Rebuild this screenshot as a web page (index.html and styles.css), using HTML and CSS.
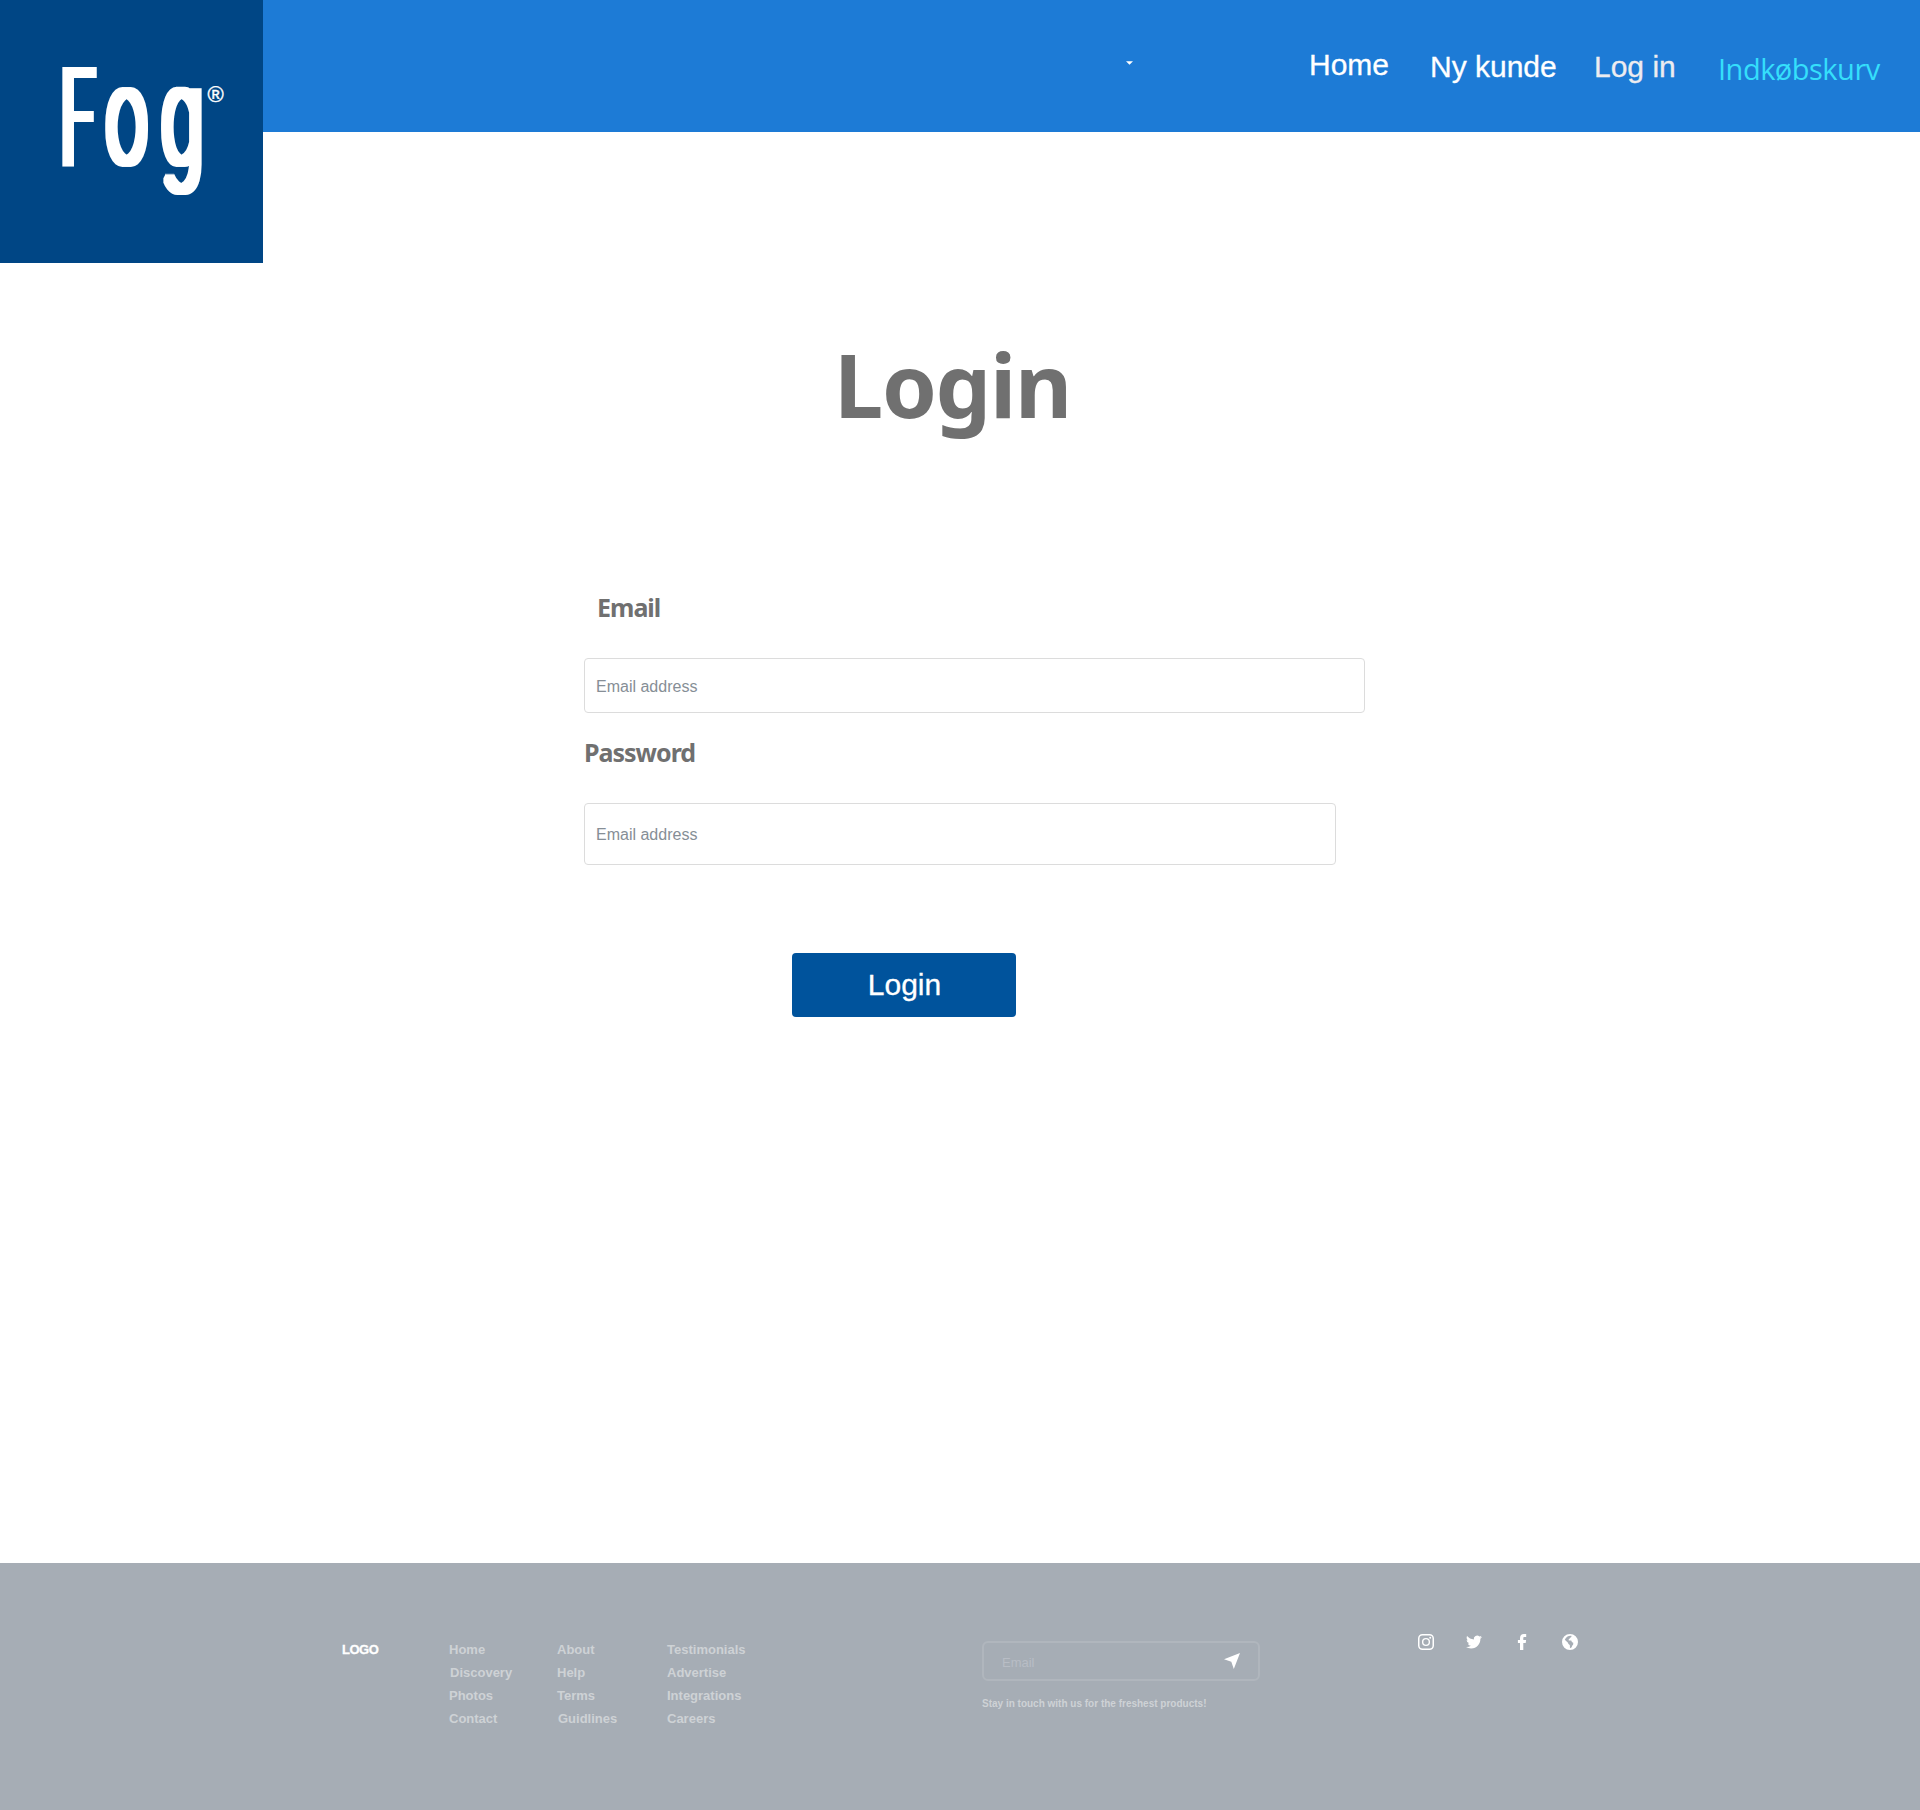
FILE: index.html
```html
<!DOCTYPE html>
<html lang="da">
<head>
<meta charset="utf-8">
<title>Fog - Login</title>
<link rel="stylesheet" href="styles.css">
</head>
<body>
<header class="topbar">
  <a class="brand" href="#">
    <svg width="263" height="263" viewBox="0 0 263 263" role="img" aria-label="Fog">
      <defs>
        <filter id="widen" filterUnits="userSpaceOnUse" x="40" y="40" width="200" height="180"><feMorphology operator="dilate" radius="4 2"/></filter>
      </defs>
      <g class="brand-word" filter="url(#widen)">
        <text transform="translate(61 164) scale(.43 .96)">F</text>
        <text transform="translate(106 163.500) scale(.53 1)">o</text>
        <text transform="translate(161 163.500) scale(.55 1)">g</text>
      </g>
      <text class="brand-mark" x="207.500" y="101.500">®</text>
    </svg>
  </a>
  <nav class="nav">
    <svg class="caret" width="7" height="4" viewBox="0 0 7 4"><path d="M0 .3h7L3.500 3.700z"/></svg>
    <a class="nav-home" href="#">Home</a>
    <a class="nav-new" href="#">Ny kunde</a>
    <a class="nav-login" href="#">Log in</a>
    <a class="nav-cart" href="#">Indkøbskurv</a>
  </nav>
</header>

<main class="login">
  <h1 class="title">Login</h1>
  <form class="form">
    <label class="label label-email" for="email">Email</label>
    <input class="field field-email" id="email" type="text" placeholder="Email address">
    <label class="label label-password" for="password">Password</label>
    <input class="field field-password" id="password" type="text" placeholder="Email address">
    <button class="submit" type="button">Login</button>
  </form>
</main>

<footer class="footer">
  <strong class="footer-logo">LOGO</strong>
  <ul class="links links-a"><li>Home</li><li class="nudge-r">Discovery</li><li>Photos</li><li>Contact</li></ul>
  <ul class="links links-b"><li>About</li><li>Help</li><li>Terms</li><li class="nudge-r">Guidlines</li></ul>
  <ul class="links links-c"><li>Testimonials</li><li>Advertise</li><li>Integrations</li><li>Careers</li></ul>
  <div class="news">
    <div class="news-box">
      <span>Email</span>
      <svg width="16" height="16" viewBox="0 0 16 16"><path d="M16 0 0 6.300l7.300 2.400L9.800 16z"/></svg>
    </div>
    <p class="news-note">Stay in touch with us for the freshest products!</p>
  </div>
  <div class="social">
    <svg width="16" height="16" viewBox="0 0 16 16"><rect x=".75" y=".75" width="14.500" height="14.500" rx="3.700" fill="none" stroke="#fff" stroke-width="1.500"/><circle cx="8" cy="8" r="3.350" fill="none" stroke="#fff" stroke-width="1.400"/><circle cx="12.200" cy="3.800" r="1"/></svg>
    <svg width="16" height="16" viewBox="0 0 24 24"><path d="M23.950 4.570a10 10 0 0 1-2.820.77 4.960 4.960 0 0 0 2.160-2.720c-.95.550-2 .95-3.130 1.180a4.920 4.920 0 0 0-8.380 4.480C7.690 8.090 4.070 6.130 1.640 3.160a4.820 4.820 0 0 0-.67 2.480c0 1.710.87 3.210 2.190 4.100a4.900 4.900 0 0 1-2.230-.62v.06a4.920 4.920 0 0 0 3.950 4.830 5 5 0 0 1-2.210.080 4.940 4.940 0 0 0 4.600 3.420A9.870 9.870 0 0 1 0 19.540a14 14 0 0 0 7.550 2.210c9.050 0 14-7.500 14-13.980 0-.21 0-.42-.02-.63a9.940 9.940 0 0 0 2.420-2.570z"/></svg>
    <svg width="16" height="16" viewBox="0 0 16 16"><path d="M6 16V9H3.900V6H6V4.200C6 1.500 7.400 0 9.900 0h2.300v2.900h-1.500c-1.200 0-1.400.5-1.400 1.400V6h2.800l-.4 3H9.300v7z"/></svg>
    <svg width="16" height="16" viewBox="0 0 16 16"><path fill-rule="evenodd" d="M8 0a8 8 0 1 0 0 16A8 8 0 0 0 8 0zM9.400 1.700c.2 1.100-.2 1.700-1.100 1.900-.2.900-.6 1.200-1.500 1.300l-.1 1.500 2.600.2c.4 1.500.9 1.900 2 2.200l-.2 2c-.8.500-1.300 1.300-1.400 2.400l-1.700 1.100-.2-3.300C6.700 10.400 6.200 9.700 6 8.700L2.800 5.800C3.800 3 6.500 1.400 9.400 1.700z"/></svg>
  </div>
</footer>
</body>
</html>
```
FILE: styles.css
```css
* { box-sizing: border-box; }
body {
  margin: 0;
  min-height: 1810px;
  display: flex;
  flex-direction: column;
  background: #fff;
  font-family: "Liberation Sans", Arial, sans-serif;
}
a { color: inherit; text-decoration: none; }

/* Header */
.topbar { display: flex; align-items: flex-start; height: 132px; background: #1d7bd6; }
.brand { flex: none; display: block; width: 263px; height: 263px; background: #004685; }
.brand svg { display: block; fill: #fff; }
.brand-word { font: 300 139px Roboto, sans-serif; }
.brand-mark { font: 400 22px "Liberation Sans", sans-serif; stroke: #fff; stroke-width: .4px; }
.nav {
  flex: 1;
  display: flex;
  align-items: flex-start;
  color: #fff;
  font-size: 30px;
  line-height: 34px;
  white-space: nowrap;
  -webkit-text-stroke: .3px;
}
.caret { flex: none; margin: 61px 176px 0 863px; fill: #fff; }
.nav a { flex: none; }
.nav-home { width: 121px; margin-top: 48px; }
.nav-new { width: 164px; margin-top: 50px; }
.nav-login { width: 124px; margin-top: 50px; color: #ececf0; }
.nav-cart {
  margin-top: 52px;
  color: #35dffb;
  font-family: "Open Sans", sans-serif;
  font-size: 29px;
  letter-spacing: -.5px;
  -webkit-text-stroke: 0;
}

/* Login form */
.login { height: 1431px; padding-top: 192px; }
.title {
  margin: 0 0 0 834px;
  height: 120px;
  color: #707070;
  font: 700 88px/120px "Noto Sans", sans-serif;
  letter-spacing: -1.3px;
}
.form { display: flex; flex-direction: column; align-items: flex-start; margin: 146px 0 0 584px; }
.label { color: #707070; font: 700 25px/34px "Noto Sans", sans-serif; letter-spacing: -1px; }
.label-email { margin-left: 13px; }
.field {
  padding: 2px 11px 0;
  border: 1px solid #dcdcdc;
  border-radius: 4px;
  background: #fff;
  font: 16px "Liberation Sans", sans-serif;
}
.field::placeholder { color: #868e96; opacity: 1; }
.field-email { width: 781px; height: 55px; margin-top: 34px; }
.label-password { margin-top: 22px; }
.field-password { width: 752px; height: 62px; margin-top: 34px; }
.submit {
  width: 224px;
  height: 64px;
  margin: 88px 0 0 208px;
  padding: 0 0 0 1px;
  border: 0;
  border-radius: 4px;
  background: #00539c;
  color: #fff;
  font: 30px "Liberation Sans", sans-serif;
  -webkit-text-stroke: .3px;
}

/* Footer */
.footer {
  display: flex;
  align-items: flex-start;
  height: 247px;
  padding: 0 0 0 342px;
  background: #a6adb5;
  color: #ced2d5;
  font-size: 13px;
  white-space: nowrap;
}
.footer-logo { width: 107px; margin-top: 75px; line-height: 23px; color: #fff; letter-spacing: -.5px; -webkit-text-stroke: .3px; }
.links { flex: none; margin: 75px 0 0; padding: 0; list-style: none; font-weight: 700; line-height: 23px; }
.links-a { width: 108px; }
.links-b { width: 110px; }
.links-c { width: 315px; }
.nudge-r { padding-left: 1px; }
.news { flex: none; width: 436px; margin-top: 78px; }
.news-box {
  display: flex;
  justify-content: space-between;
  width: 278px;
  height: 40px;
  padding: 10px 18px 0 18px;
  border: 2px solid #b0b6bd;
  border-radius: 6px;
  color: #b8bdc5;
  line-height: 20px;
}
.news-box svg { fill: #fff; }
.news-note { margin: 15px 0 0; font-size: 10px; font-weight: 700; line-height: 16px; }
.social { display: flex; gap: 32px; margin-top: 71px; fill: #fff; }
```
